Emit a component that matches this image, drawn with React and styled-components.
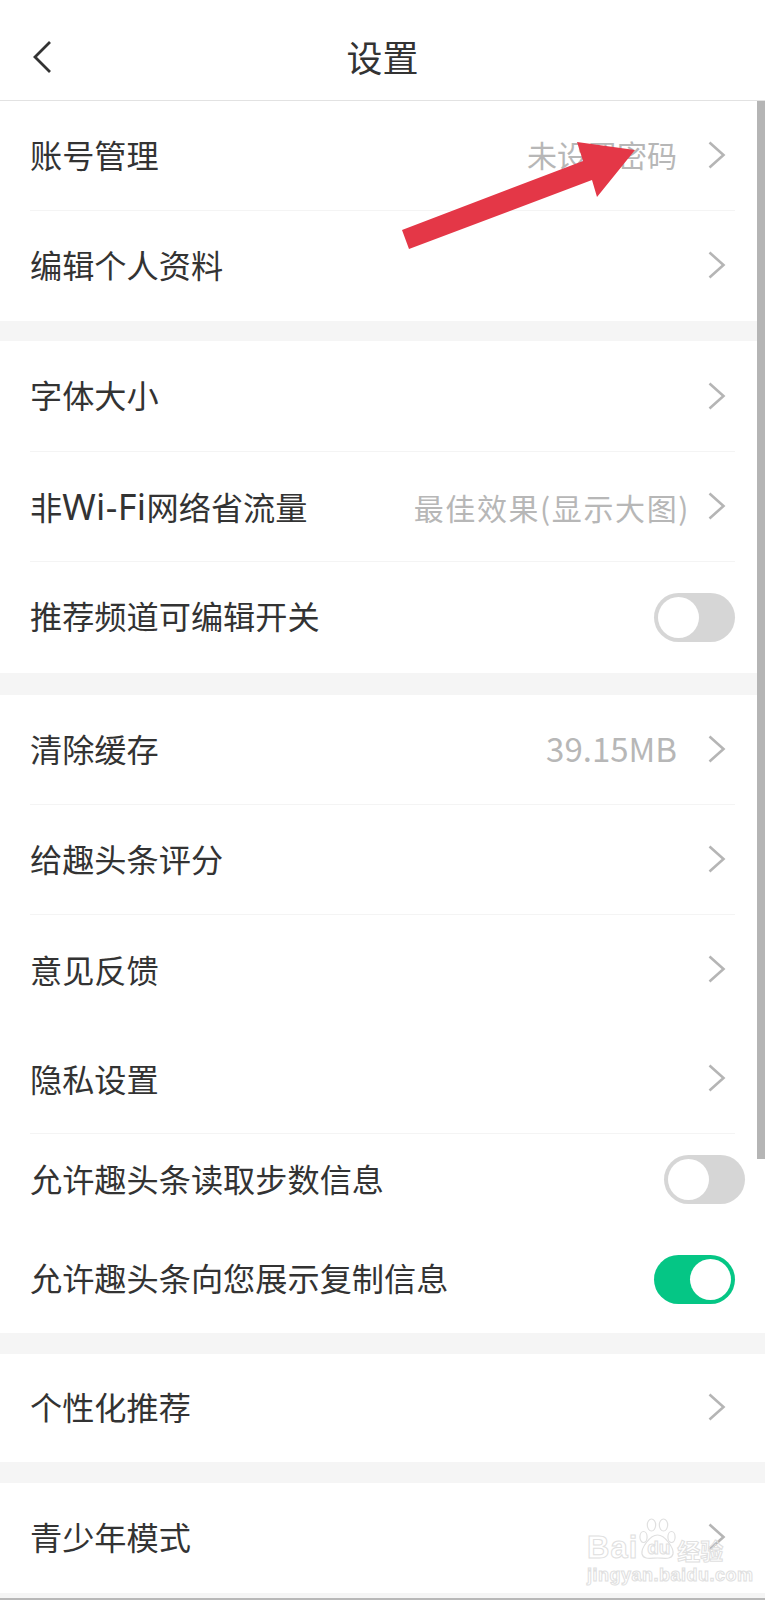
import React from "react";
import styled, { createGlobalStyle } from "styled-components";

const GlobalStyle = createGlobalStyle`
  html, body {
    margin: 0;
    padding: 0;
    background: #ffffff;
  }
  * {
    box-sizing: border-box;
  }
`;

const Page = styled.div`
  position: relative;
  width: 765px;
  height: 1600px;
  overflow: hidden;
  background: #f5f5f5;
  color: #333333;
  font-family: "Noto Sans CJK SC", "Noto Sans", sans-serif;
`;

const Header = styled.header`
  position: relative;
  display: flex;
  align-items: center;
  justify-content: center;
  height: 101px;
  background: #ffffff;
  border-bottom: 1px solid #e2e2e2;
`;

const BackIcon = styled.svg`
  position: absolute;
  left: 30px;
  top: 39px;
  width: 26px;
  height: 36px;
`;

const Title = styled.h1`
  margin: 0;
  font-size: 36px;
  font-weight: 400;
  line-height: 50px;
  padding-top: 12px;
`;

const Section = styled.section`
  background: #ffffff;
  margin-bottom: ${(p) => p.$gap}px;
`;

const Row = styled.div`
  display: flex;
  align-items: center;
  height: ${(p) => p.$h}px;
  margin: 0 30px;
  border-bottom: 1px solid ${(p) => (p.$line ? "#f4f4f4" : "transparent")};
`;

const Label = styled.span`
  flex: 1;
  font-size: 32.2px;
  line-height: 44px;
  padding-bottom: ${(p) => p.$lift ?? 4}px;
  white-space: nowrap;
`;

const Latin = styled.span`
  font-family: "Noto Sans", sans-serif;
  font-size: 36px;
  letter-spacing: 0.4px;
`;

const Value = styled.span`
  margin-right: ${(p) => p.$right || 30}px;
  padding-bottom: ${(p) => p.$lift ?? 4}px;
  font-size: ${(p) => p.$size || 30}px;
  line-height: 44px;
  letter-spacing: ${(p) => p.$track || 0}px;
  color: #b7b7b7;
  white-space: nowrap;
`;

const ChevronIcon = styled.svg`
  width: 20px;
  height: 30px;
  margin-right: 8px;
  margin-bottom: 1px;
  flex-shrink: 0;
`;

const Toggle = styled.div`
  position: relative;
  width: 81px;
  height: 49px;
  margin-right: ${(p) => p.$shift || 0}px;
  border-radius: 25px;
  background: ${(p) => (p.$on ? "#05c685" : "#d6d6d6")};
  flex-shrink: 0;
`;

const Knob = styled.div`
  position: absolute;
  top: 4px;
  left: ${(p) => (p.$on ? "36px" : "4px")};
  width: 41px;
  height: 41px;
  border-radius: 50%;
  background: #ffffff;
`;

const Scrollbar = styled.div`
  position: absolute;
  top: 101px;
  right: 0;
  width: 8px;
  height: 1058px;
  background: #b5b5b5;
`;

const BottomLine = styled.div`
  position: absolute;
  left: 0;
  right: 0;
  bottom: 0;
  height: 2px;
  background: #b8b8b8;
`;

const ArrowMark = styled.svg`
  position: absolute;
  left: 400px;
  top: 140px;
  width: 236px;
  height: 110px;
`;

const Watermark = styled.div`
  position: absolute;
  left: 587px;
  top: 1517px;
  width: 140px;
  height: 68px;
  color: transparent;
  -webkit-text-stroke: 1px #e0e0e0;
  pointer-events: none;
`;

const WatermarkTop = styled.div`
  display: flex;
  align-items: flex-end;
  height: 48px;
`;

const WatermarkBai = styled.span`
  font-family: "Liberation Sans", sans-serif;
  font-size: 31px;
  line-height: 34px;
  font-weight: 700;
  letter-spacing: 1px;
`;

const Paw = styled.div`
  position: relative;
  width: 37px;
  height: 42px;
  margin: 0 1px 5px 1px;
  flex-shrink: 0;
`;

const PawIcon = styled.svg`
  display: block;
  width: 37px;
  height: 42px;
`;

const WatermarkDu = styled.span`
  position: absolute;
  left: 8px;
  bottom: 1px;
  font-family: "Liberation Sans", sans-serif;
  font-size: 19px;
  line-height: 22px;
  font-weight: 700;
`;

const WatermarkJing = styled.span`
  font-size: 23px;
  line-height: 30px;
  font-weight: 700;
  white-space: nowrap;
`;

const WatermarkUrl = styled.div`
  font-family: "Liberation Sans", sans-serif;
  font-size: 18px;
  line-height: 20px;
  font-weight: 700;
  white-space: nowrap;
  letter-spacing: 0.5px;
`;

const Chevron = () => (
  <ChevronIcon viewBox="0 0 20 30" fill="none">
    <path d="M2.5 2.5 L16.5 15 L2.5 27.5" stroke="#b5b5b5" strokeWidth="2.6" />
  </ChevronIcon>
);

const sections = [
  {
    gap: 20,
    rows: [
      { label: "账号管理", value: "未设置密码", h: 110, line: true },
      { label: "编辑个人资料", h: 110 },
    ],
  },
  {
    gap: 22,
    rows: [
      { label: "字体大小", h: 111, line: true },
      {
        label: (
          <>
            非<Latin>Wi-Fi</Latin>网络省流量
          </>
        ),
        value: "最佳效果(显示大图)",
        track: 1.6,
        right: 17,
        lift: 0,
        h: 110,
        line: true,
      },
      { label: "推荐频道可编辑开关", h: 111, toggle: "off" },
    ],
  },
  {
    gap: 21,
    rows: [
      { label: "清除缓存", value: "39.15MB", size: 33, h: 110, line: true },
      { label: "给趣头条评分", h: 110, line: true },
      { label: "意见反馈", lift: 0, h: 109 },
      { label: "隐私设置", lift: 2, h: 110, line: true },
      { label: "允许趣头条读取步数信息", h: 92, toggle: "off", shift: -10 },
      { label: "允许趣头条向您展示复制信息", h: 107, toggle: "on" },
    ],
  },
  {
    gap: 21,
    rows: [{ label: "个性化推荐", h: 108 }],
  },
  {
    gap: 0,
    rows: [{ label: "青少年模式", h: 110 }],
  },
];

export default function App() {
  return (
    <Page>
      <GlobalStyle />
      <Header>
        <BackIcon viewBox="0 0 26 36" fill="none">
          <path d="M20 3 L5 18 L20 33" stroke="#333333" strokeWidth="2.8" />
        </BackIcon>
        <Title>设置</Title>
      </Header>

      {sections.map((section, i) => (
        <Section key={i} $gap={section.gap}>
          {section.rows.map((row, j) => (
            <Row key={j} $h={row.h} $line={row.line}>
              <Label $lift={row.lift}>{row.label}</Label>
              {row.value && (
                <Value $size={row.size} $track={row.track} $right={row.right} $lift={row.lift}>
                  {row.value}
                </Value>
              )}
              {row.toggle ? (
                <Toggle $on={row.toggle === "on"} $shift={row.shift}>
                  <Knob $on={row.toggle === "on"} />
                </Toggle>
              ) : (
                <Chevron />
              )}
            </Row>
          ))}
        </Section>
      ))}

      <Scrollbar />
      <BottomLine />

      <ArrowMark viewBox="400 140 236 110">
        <polygon
          points="402,230 583,161 577,142 635,150 597,197 592,180 409,249"
          fill="#e43747"
        />
      </ArrowMark>

      <Watermark>
        <WatermarkTop>
          <WatermarkBai>Bai</WatermarkBai>
          <Paw>
            <PawIcon viewBox="0 0 37 42" fill="none" stroke="#e0e0e0" strokeWidth="1.2">
              <ellipse cx="4.5" cy="19" rx="3.6" ry="5.5" />
              <ellipse cx="12.5" cy="7" rx="4.2" ry="6" />
              <ellipse cx="24.5" cy="7" rx="4.2" ry="6" />
              <ellipse cx="32.5" cy="19" rx="3.6" ry="5.5" />
              <path d="M18.5 17 C11 17 2 30 3 36 C4.5 42 12 40 18.5 40 C25 40 32.5 42 34 36 C35 30 26 17 18.5 17 Z" />
            </PawIcon>
            <WatermarkDu>du</WatermarkDu>
          </Paw>
          <WatermarkJing>经验</WatermarkJing>
        </WatermarkTop>
        <WatermarkUrl>jingyan.baidu.com</WatermarkUrl>
      </Watermark>
    </Page>
  );
}
